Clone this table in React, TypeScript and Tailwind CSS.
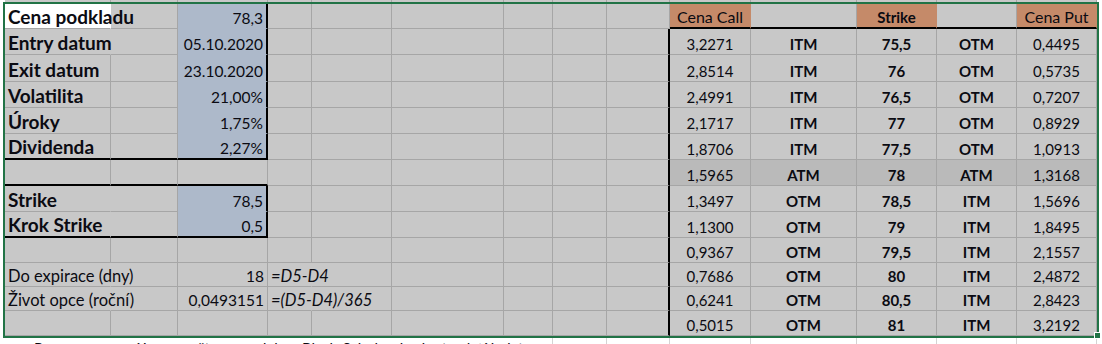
import React from "react";

// Excel-like sheet: input block on the left, option chain on the right.
const COLS = [106, 67, 90, 44, 80, 112, 49, 54, 63, 81, 106, 80, 80, 80];

type Cell = {
  t?: string;
  bold?: boolean;
  size?: "label" | "text" | "value" | "head";
  italic?: boolean;
  align?: "left" | "right" | "center";
  fill?: "blue" | "orange" | "white" | "atm";
  right?: "grid" | "none" | "thick";
  bottom?: "grid" | "none" | "thick";
};

const sheet: Cell[][] = Array.from({ length: 13 }, () => Array.from({ length: 14 }, () => ({} as Cell)));

const inputs: [number, string, string][] = [
  [0, "Cena podkladu", "78,3"],
  [1, "Entry datum", "05.10.2020"],
  [2, "Exit datum", "23.10.2020"],
  [3, "Volatilita", "21,00%"],
  [4, "Úroky", "1,75%"],
  [5, "Dividenda", "2,27%"],
  [7, "Strike", "78,5"],
  [8, "Krok Strike", "0,5"],
];
for (const [r, label, value] of inputs) {
  sheet[r][0] = {
    t: label,
    bold: true,
    size: "label",
    right: [0, 1, 7, 8].includes(r) ? "none" : "grid",
    fill: r === 0 ? "white" : undefined,
  };
  sheet[r][2] = { t: value, size: "value", align: "right", fill: "blue", right: "thick", bottom: "none" };
}
for (const r of [5, 6, 8]) for (const c of [0, 1, 2]) sheet[r][c].bottom = "thick";

sheet[10][0] = { t: "Do expirace (dny)", size: "text", right: "none" };
sheet[10][2] = { t: "18", size: "value", align: "right" };
sheet[10][3] = { t: "=D5-D4", size: "text", italic: true, right: "none" };
sheet[11][0] = { t: "Život opce (roční)", size: "text", right: "none" };
sheet[11][2] = { t: "0,0493151", size: "value", align: "right" };
sheet[11][3] = { t: "=(D5-D4)/365", size: "text", italic: true, right: "none" };

sheet[0][9] = { t: "Cena Call", size: "head", fill: "orange", align: "center", right: "none", bottom: "thick" };
sheet[0][10] = { bottom: "thick" };
sheet[0][11] = { t: "Strike", bold: true, fill: "orange", align: "center", right: "none", bottom: "thick" };
sheet[0][12] = { bottom: "thick" };
sheet[0][13] = { t: "Cena Put", size: "head", fill: "orange", align: "center", right: "none", bottom: "thick" };

const chain = [
  ["3,2271", "ITM", "75,5", "OTM", "0,4495"],
  ["2,8514", "ITM", "76", "OTM", "0,5735"],
  ["2,4991", "ITM", "76,5", "OTM", "0,7207"],
  ["2,1717", "ITM", "77", "OTM", "0,8929"],
  ["1,8706", "ITM", "77,5", "OTM", "1,0913"],
  ["1,5965", "ATM", "78", "ATM", "1,3168"],
  ["1,3497", "OTM", "78,5", "ITM", "1,5696"],
  ["1,1300", "OTM", "79", "ITM", "1,8495"],
  ["0,9367", "OTM", "79,5", "ITM", "2,1557"],
  ["0,7686", "OTM", "80", "ITM", "2,4872"],
  ["0,6241", "OTM", "80,5", "ITM", "2,8423"],
  ["0,5015", "OTM", "81", "ITM", "3,2192"],
];
chain.forEach((vals, i) => {
  const r = i + 1;
  sheet[r][8].right = "thick";
  vals.forEach((t, j) => {
    sheet[r][9 + j] = { t, align: "center", bold: j >= 1 && j <= 3, fill: r === 6 ? "atm" : undefined };
  });
});

function cellClass(c: Cell) {
  const k = ["flex items-end whitespace-nowrap px-[3px] pb-[2px] border-solid leading-none text-[#0b0b12]"];
  k.push(c.align === "right" ? "justify-end" : c.align === "center" ? "justify-center" : "justify-start");
  if (c.fill === "blue") k.push("bg-[#adb9ca]");
  else if (c.fill === "orange") k.push("bg-[#c58a69]");
  else if (c.fill === "white") k.push("bg-white");
  else if (c.fill === "atm") k.push("bg-[#bababa]");
  if (c.right === "thick") k.push("border-r-2 border-r-black");
  else if (c.right === "none") k.push("border-r border-r-transparent");
  else k.push("border-r border-r-[#a6a6a6]");
  if (c.bottom === "thick") k.push("border-b-2 border-b-black");
  else if (c.bottom === "none") k.push("border-b border-b-transparent");
  else k.push("border-b border-b-[#a6a6a6]");
  if (c.size === "label") k.push("text-[19px]");
  else if (c.size === "text") k.push("text-[16.5px]");
  else if (c.size === "value") k.push("text-[15.5px]");
  else if (c.size === "head") k.push("text-[16px]");
  else k.push("text-[15px]");
  if (c.bold) k.push("font-bold");
  if (c.italic) k.push("italic");
  return k.join(" ");
}

export default function App() {
  return (
    <div className="relative flex h-[344px] w-[1102px] flex-col overflow-hidden bg-white font-['Lato',sans-serif]">
      {/* tail of the row above */}
      <div className="flex h-[2px] shrink-0">
        <div className="w-[5px] shrink-0 bg-white" />
        <div className="flex bg-[#c8c8c8]">
          {COLS.map((w, i) => (
            <div key={i} className="h-full border-r border-r-[#a6a6a6]" style={{ width: w }} />
          ))}
        </div>
      </div>

      <div className="flex shrink-0">
        <div className="w-[3px] shrink-0" />
        <div className="border-2 border-[#217346]">
          <div className="grid grid-cols-[106px_67px_90px_44px_80px_112px_49px_54px_63px_81px_106px_80px_80px_80px] grid-rows-[25px_26px_27px_26px_26px_26px_26px_26px_26px_25px_24px_24px_25px] bg-[#c8c8c8]">
            {sheet.map((row, r) =>
              row.map((c, ci) => (
                <div key={`${r}-${ci}`} className={cellClass(c)}>
                  {c.t && <span>{c.t}</span>}
                </div>
              ))
            )}
          </div>
        </div>
      </div>

      {/* next row, mostly cut off */}
      <div className="flex h-[30px] shrink-0">
        <div className="w-[5px] shrink-0" />
        <div className="grid grid-cols-[106px_67px_90px_44px_80px_112px_49px_54px_63px_81px_106px_80px_80px_80px]">
          <div className="flex items-start whitespace-nowrap pl-[29px] pt-[3px] text-[15px] leading-none text-[#0b0b12]">
            Pozn.: ceny opcí jsou spočteny modelem Black-Scholes, hodnoty platí k datu
          </div>
          <div />
          <div />
          <div />
          <div />
          <div />
          {COLS.slice(6).map((_, i) => (
            <div key={i} className="border-r border-r-[#d4d4d4]" />
          ))}
        </div>
      </div>

      <div className="absolute left-[1094px] top-[332px] h-[7px] w-[7px] border border-white bg-[#217346]" />
    </div>
  );
}
